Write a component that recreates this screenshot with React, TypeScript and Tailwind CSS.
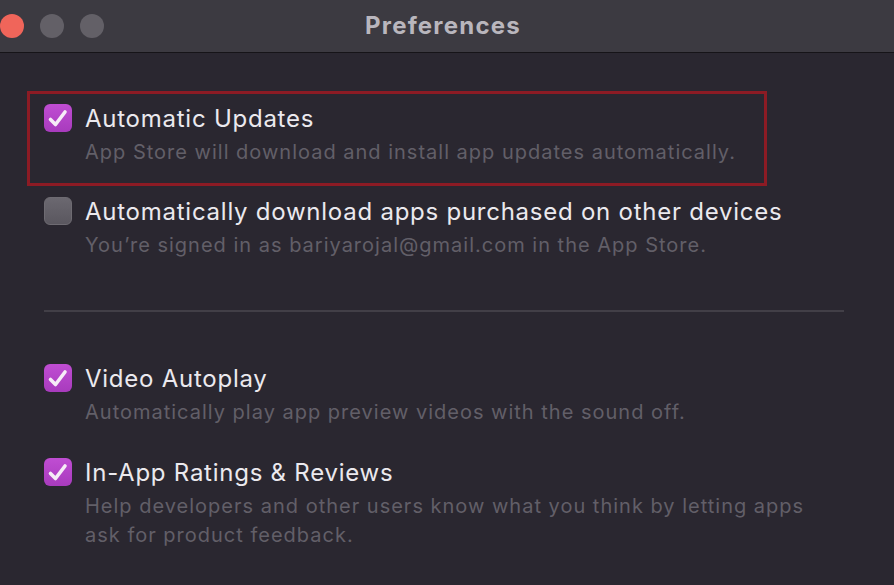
import React from 'react';

interface PrefItem {
  title: string;
  lines: string[];
  checked: boolean;
}

const Checkbox = ({ checked }: { checked: boolean }) => {
  if (!checked) {
    return (
      <div className="w-[28px] h-[28px] shrink-0 rounded-[6px] bg-gradient-to-b from-[#6b6870] to-[#5a575f] border border-[#6e6b72]" />
    );
  }
  return (
    <div className="w-[28px] h-[28px] shrink-0 rounded-[6px] bg-gradient-to-b from-[#c04dd3] to-[#a83bbd] flex items-center justify-center">
      <svg width="28" height="28" viewBox="0 0 28 28" fill="none">
        <path d="M6.5 15.5 L11.5 20.5 L21 8" stroke="#f6ecf7" strokeWidth="3.6" strokeLinecap="round" strokeLinejoin="round" />
      </svg>
    </div>
  );
};

const Row = ({ item }: { item: PrefItem }) => (
  <div className="flex gap-[13px]">
    <Checkbox checked={item.checked} />
    <div className="flex flex-col gap-[4px]">
      <div className="text-[24px] leading-[30px] tracking-[0.75px] text-[#ebe9ee]">{item.title}</div>
      <div className="text-[20px] leading-[29px] tracking-[1px] text-[#625f68]">
        {item.lines.map((l) => (
          <div key={l}>{l}</div>
        ))}
      </div>
    </div>
  </div>
);

const App = () => {
  const updates: PrefItem = {
    title: 'Automatic Updates',
    lines: ['App Store will download and install app updates automatically.'],
    checked: true,
  };
  const purchased: PrefItem = {
    title: 'Automatically download apps purchased on other devices',
    lines: ['You\u2019re signed in as bariyarojal@gmail.com in the App Store.'],
    checked: false,
  };
  const video: PrefItem = {
    title: 'Video Autoplay',
    lines: ['Automatically play app preview videos with the sound off.'],
    checked: true,
  };
  const ratings: PrefItem = {
    title: 'In-App Ratings & Reviews',
    lines: ['Help developers and other users know what you think by letting apps', 'ask for product feedback.'],
    checked: true,
  };

  return (
    <div className="w-[894px] h-[585px] overflow-hidden bg-[#2a2730] font-['Inter','Noto_Sans',sans-serif]">
      {/* title bar */}
      <div className="h-[53px] flex items-center bg-[#3c3a41] border-b border-[#161418]">
        <div className="flex gap-[16px]">
          <div className="w-[24px] h-[24px] rounded-full bg-[#f0655a]" />
          <div className="w-[24px] h-[24px] rounded-full bg-[#636067]" />
          <div className="w-[24px] h-[24px] rounded-full bg-[#636067]" />
        </div>
        <div className="ml-[261px] text-[24px] font-bold text-[#b9b6bd] tracking-[1.2px]">Preferences</div>
      </div>

      <div className="pt-[38px]">
        <div className="ml-[27px] w-[740px] border-[3px] border-[#8c1b24] pl-[14px] pt-[10px] pb-[16px]">
          <Row item={updates} />
        </div>
        <div className="pl-[44px] pt-[11px]">
          <Row item={purchased} />
        </div>
        <div className="ml-[44px] w-[800px] h-[2px] bg-[#423f47] mt-[50px]" />
        <div className="pl-[44px] pt-[52px] flex flex-col gap-[31px]">
          <Row item={video} />
          <Row item={ratings} />
        </div>
      </div>
    </div>
  );
};

export default App;
